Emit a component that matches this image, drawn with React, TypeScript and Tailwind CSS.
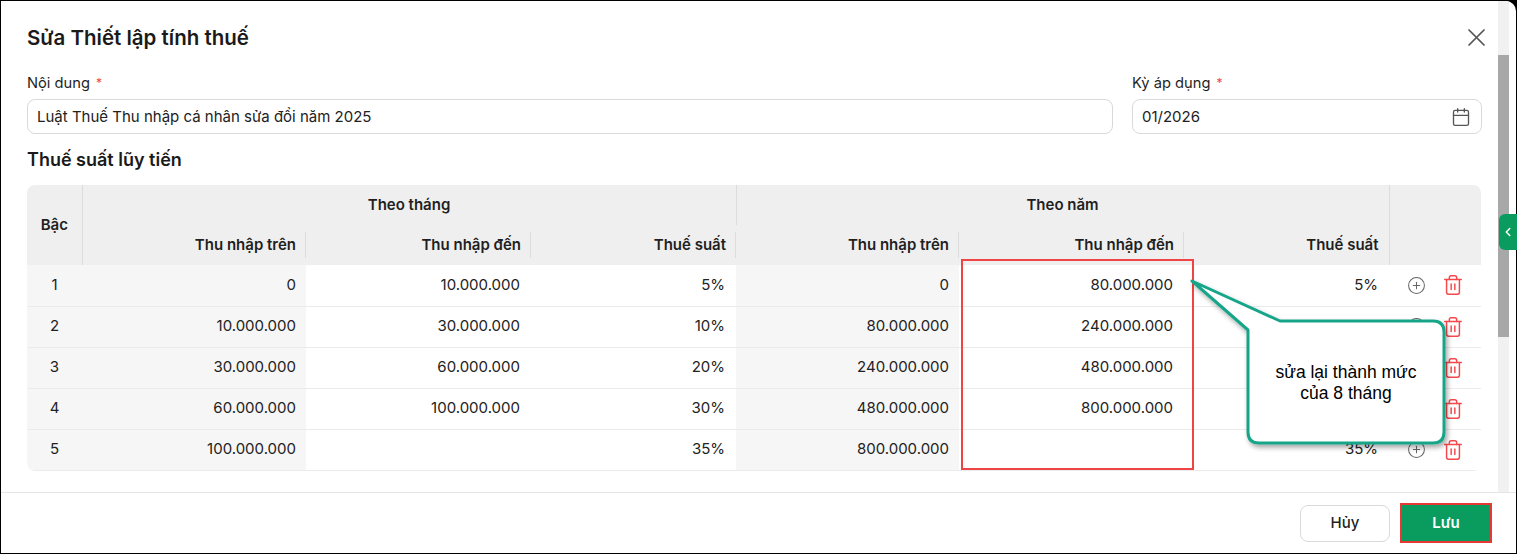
import { Calendar, CirclePlus, Trash2, ChevronLeft } from "lucide-react";

const rows = [
  { level: 1, mFrom: "0", mTo: "10.000.000", mRate: "5%", yFrom: "0", yTo: "80.000.000", yRate: "5%" },
  { level: 2, mFrom: "10.000.000", mTo: "30.000.000", mRate: "10%", yFrom: "80.000.000", yTo: "240.000.000", yRate: "10%" },
  { level: 3, mFrom: "30.000.000", mTo: "60.000.000", mRate: "20%", yFrom: "240.000.000", yTo: "480.000.000", yRate: "20%" },
  { level: 4, mFrom: "60.000.000", mTo: "100.000.000", mRate: "30%", yFrom: "480.000.000", yTo: "800.000.000", yRate: "30%" },
  { level: 5, mFrom: "100.000.000", mTo: "", mRate: "35%", yFrom: "800.000.000", yTo: "", yRate: "35%" },
];

const subHead =
  "relative h-[40px] pr-[10px] text-right font-semibold after:absolute after:right-0 after:top-[7px] after:bottom-[7px] after:w-px after:bg-[#dcdcdc] after:content-['']";

const App = () => {
  return (
    <div className="relative w-[1517px] h-[554px] bg-black p-px font-['Inter',sans-serif] text-[#1f1f1f]">
      <div className="w-full h-full bg-white rounded-tr-[10px] overflow-hidden flex flex-col">
        {/* body */}
        <div className="flex flex-1 min-h-0">
          <div className="flex-1 pl-[26px] pr-[16px] pt-[17px]">
            <div className="h-[40px] flex items-center justify-between">
              <h2 className="text-[20.5px] font-semibold text-[#1a1a1a]">Sửa Thiết lập tính thuế</h2>
              <svg width="17" height="17" viewBox="0 0 17 17" className="mr-[-3px] mt-[-2px]">
                <path d="M1 1 L16 16 M16 1 L1 16" stroke="#555" strokeWidth="1.7" strokeLinecap="round" />
              </svg>
            </div>

            <div className="flex gap-[19px] mt-[15px]">
              <div className="flex-1">
                <div className="h-[20px] text-[14.7px] flex items-center pt-px">
                  Nội dung <span className="text-[#ef4444] ml-[6px] text-[12px] self-start">*</span>
                </div>
                <div className="mt-[6px] h-[35px] border border-[#d9d9d9] rounded-lg px-[9px] pt-[2px] flex items-center text-[15px] text-[#222]">
                  Luật Thuế Thu nhập cá nhân sửa đổi năm 2025
                </div>
              </div>
              <div className="w-[350px]">
                <div className="h-[20px] text-[14.7px] flex items-center pt-px">
                  Kỳ áp dụng <span className="text-[#ef4444] ml-[6px] text-[12px] self-start">*</span>
                </div>
                <div className="mt-[6px] h-[35px] border border-[#d9d9d9] rounded-lg pl-[9px] pr-[10px] flex items-center justify-between text-[15px] text-[#222]">
                  <span className="pt-[2px]">01/2026</span>
                  <Calendar size={20} strokeWidth={1.6} color="#555" />
                </div>
              </div>
            </div>

            <h3 className="mt-[13px] h-[24px] flex items-center text-[18px] font-semibold text-[#1a1a1a]">
              Thuế suất lũy tiến
            </h3>

            <div className="mt-[14px] rounded-lg overflow-hidden w-[1454px]">
              <table className="w-[1454px] table-fixed border-collapse text-[15px]">
                <colgroup>
                  <col className="w-[55px]" />
                  <col className="w-[224px]" />
                  <col className="w-[225px]" />
                  <col className="w-[205px]" />
                  <col className="w-[223px]" />
                  <col className="w-[225px]" />
                  <col className="w-[205px]" />
                  <col className="w-[92px]" />
                </colgroup>
                <thead className="bg-[#efefef]">
                  <tr>
                    <th rowSpan={2} className="font-semibold text-center border-r border-[#dcdcdc]">
                      Bậc
                    </th>
                    <th colSpan={3} className="h-[40px] font-semibold text-center border-r border-[#dcdcdc]">
                      Theo tháng
                    </th>
                    <th colSpan={3} className="h-[40px] font-semibold text-center">
                      Theo năm
                    </th>
                    <th rowSpan={2} className="border-l border-[#dcdcdc]"></th>
                  </tr>
                  <tr>
                    <th className={subHead}>Thu nhập trên</th>
                    <th className={subHead}>Thu nhập đến</th>
                    <th className={subHead}>Thuế suất</th>
                    <th className={subHead}>Thu nhập trên</th>
                    <th className={subHead}>Thu nhập đến</th>
                    <th className="h-[40px] pr-[10px] text-right font-semibold">Thuế suất</th>
                  </tr>
                </thead>
                <tbody className="text-[#222]">
                  {rows.map((r) => (
                    <tr key={r.level} className="h-[41px] border-b border-[#ebebeb]">
                      <td className="bg-[#f6f6f6] text-center">{r.level}</td>
                      <td className="bg-[#f6f6f6] text-right pr-[10px]">{r.mFrom}</td>
                      <td className="text-right pr-[11px]">{r.mTo}</td>
                      <td className="text-right pr-[11px]">{r.mRate}</td>
                      <td className="bg-[#f6f6f6] text-right pr-[10px]">{r.yFrom}</td>
                      <td className="text-right pr-[11px]">{r.yTo}</td>
                      <td className="text-right pr-[11px]">{r.yRate}</td>
                      <td>
                        <div className="flex items-center pl-[18px] gap-[16px]">
                          <CirclePlus size={19} strokeWidth={1.3} color="#666" />
                          <Trash2 size={22} strokeWidth={1.6} color="#f5484d" />
                        </div>
                      </td>
                    </tr>
                  ))}
                </tbody>
              </table>
            </div>
          </div>

          {/* scrollbar */}
          <div className="w-[11px] bg-[#f1f1f1]">
            <div className="mt-[54px] h-[282px] bg-[#a8a8a8]"></div>
          </div>
          <div className="w-[7px]"></div>
        </div>

        {/* footer */}
        <div className="h-[61px] border-t border-[#e5e5e5] flex items-center justify-end gap-[12px] pr-[26px]">
          <button className="w-[90px] h-[37px] border border-[#d9d9d9] rounded-lg text-[15px] font-medium bg-white">
            Hủy
          </button>
          <button className="w-[88px] h-[36px] bg-[#0a9c5f] text-white text-[15px] font-semibold outline-2 outline-[#e53935]">
            Lưu
          </button>
        </div>
      </div>

      {/* green side tab */}
      <div className="absolute left-[1499px] top-[214px] w-[18px] h-[36px] rounded-l-md bg-[#0a9c5f] flex items-center justify-center">
        <ChevronLeft size={14} strokeWidth={2.5} color="white" />
      </div>

      {/* annotation: red highlight */}
      <div className="absolute left-[961px] top-[259px] w-[233px] h-[211px] border-2 border-[#ef4444]"></div>

      {/* annotation: callout */}
      <svg className="absolute left-0 top-0 pointer-events-none" width="1517" height="554">
        <defs>
          <filter id="sh" x="-20%" y="-20%" width="140%" height="140%">
            <feDropShadow dx="2" dy="3" stdDeviation="2.5" floodColor="#000" floodOpacity="0.35" />
          </filter>
        </defs>
        <path
          d="M1280 321 L1433 321 Q1444 321 1444 332 L1444 432 Q1444 443 1433 443 L1259 443 Q1248 443 1248 432 L1248 330 L1192 281 Z"
          fill="white"
          stroke="#17a589"
          strokeWidth="3"
          strokeLinejoin="round"
          filter="url(#sh)"
        />
      </svg>
      <div className="absolute left-[1248px] top-[322px] w-[196px] h-[122px] flex items-center justify-center text-center font-['Liberation_Sans',Arial,sans-serif] text-[17.5px] leading-[21px] text-black">
        sửa lại thành mức
        <br />
        của 8 tháng
      </div>
    </div>
  );
};

export default App;
